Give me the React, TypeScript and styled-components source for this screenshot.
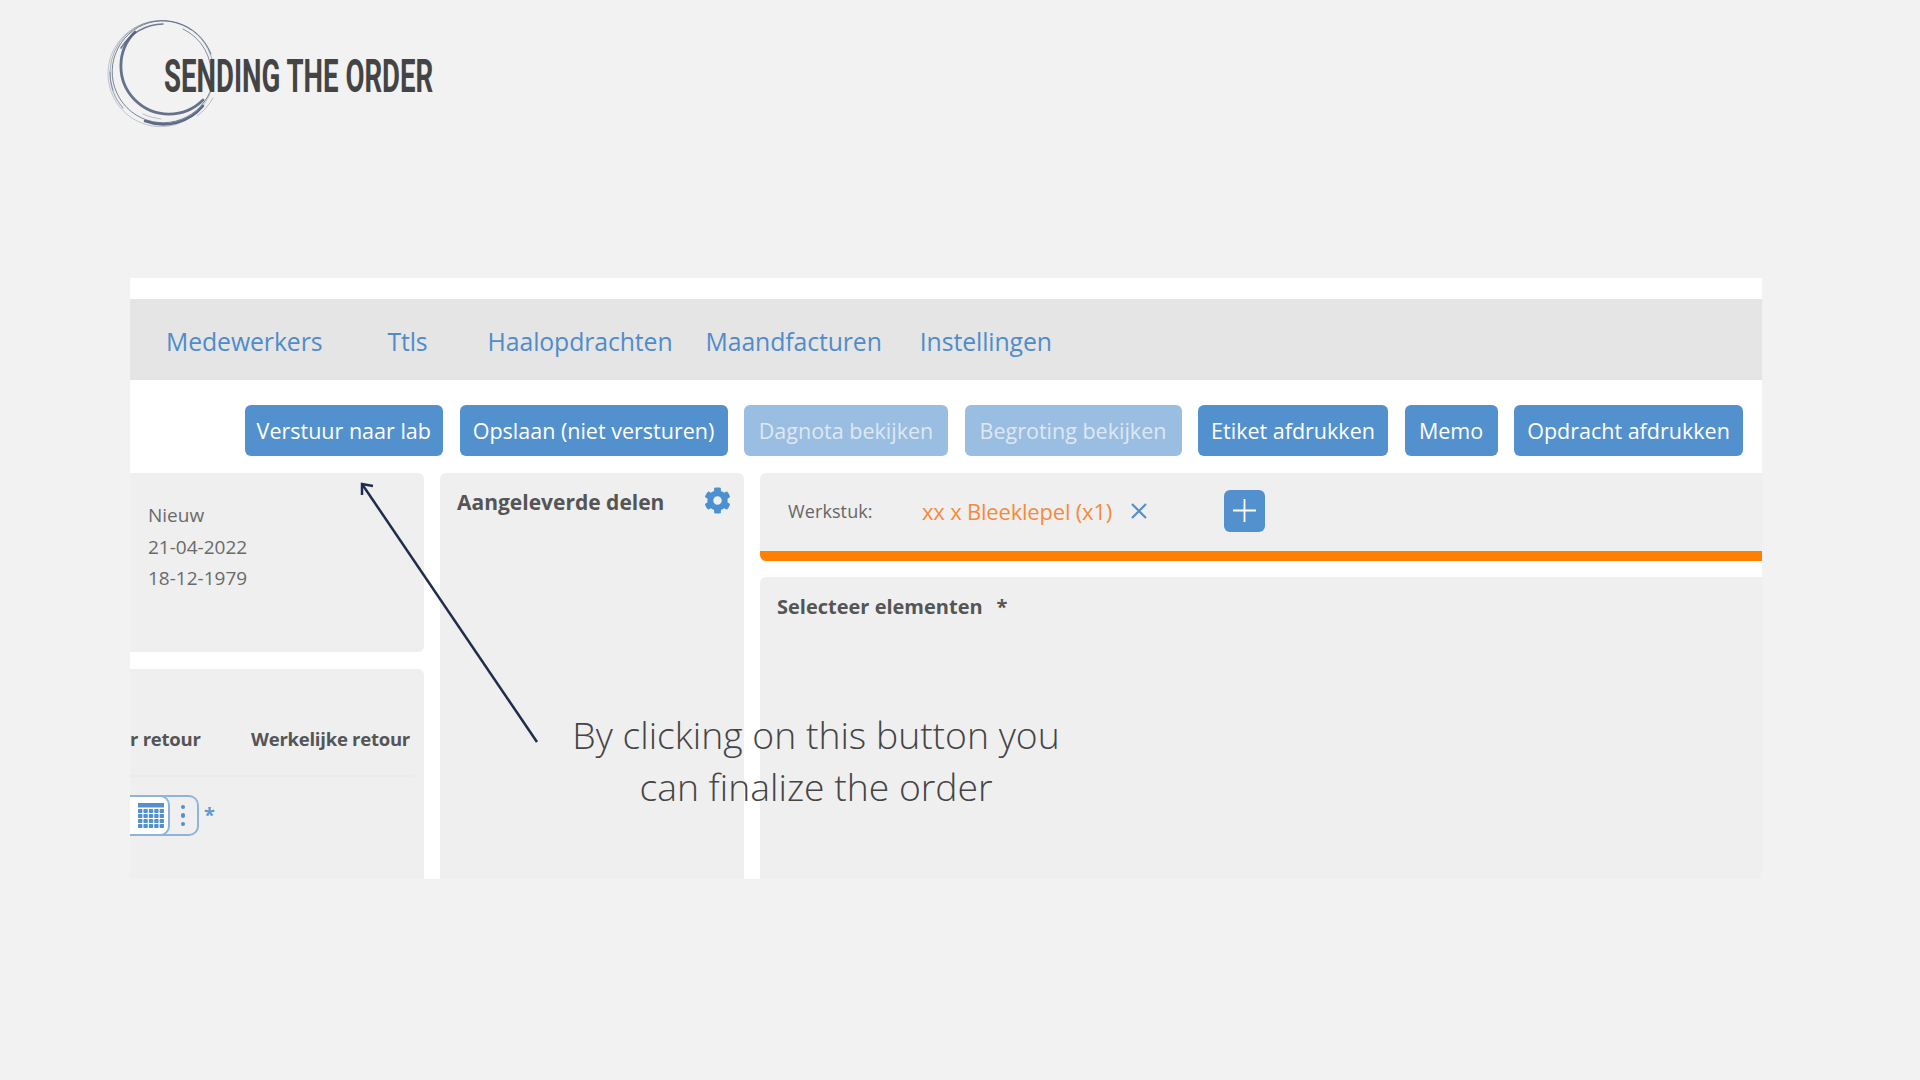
import React from "react";
import styled, { createGlobalStyle } from "styled-components";
import { FaCog } from "react-icons/fa";

const navItems = [
  { label: "Medewerkers", after: 65 },
  { label: "Ttls", after: 60 },
  { label: "Haalopdrachten", after: 33 },
  { label: "Maandfacturen", after: 38 },
  { label: "Instellingen", after: 0 },
];

const actions = [
  { label: "Verstuur naar lab", width: 198.5 },
  { label: "Opslaan (niet versturen)", width: 268 },
  { label: "Dagnota bekijken", width: 204, disabled: true },
  { label: "Begroting bekijken", width: 217, disabled: true },
  { label: "Etiket afdrukken", width: 190 },
  { label: "Memo", width: 93 },
  { label: "Opdracht afdrukken", width: 229 },
];

const App: React.FC = () => {
  return (
    <Page>
      <GlobalStyle />
      <Header>
        <LogoRing />
        <Title>SENDING THE ORDER</Title>
      </Header>
      <Frame>
        <Nav>
          {navItems.map((item) => (
            <NavLink key={item.label} $after={item.after}>{item.label}</NavLink>
          ))}
        </Nav>
        <Toolbar>
          {actions.map((action) => (
            <ActionButton key={action.label} $width={action.width} $disabled={action.disabled}>
              {action.label}
            </ActionButton>
          ))}
        </Toolbar>
        <Workspace>
          <LeftColumn>
            <StatusPanel>
              <StatusLine>Nieuw</StatusLine>
              <StatusLine>21-04-2022</StatusLine>
              <StatusLine>18-12-1979</StatusLine>
            </StatusPanel>
            <ReturnPanel>
              <ReturnHead>
                <ColumnTitle>r retour</ColumnTitle>
                <ColumnTitle>Werkelijke retour</ColumnTitle>
              </ReturnHead>
              <ReturnRow>
                <DateGroup>
                  <CalendarButton><CalendarIcon /></CalendarButton>
                  <MoreButton><MoreDot /><MoreDot /><MoreDot /></MoreButton>
                </DateGroup>
                <Required>*</Required>
              </ReturnRow>
            </ReturnPanel>
          </LeftColumn>
          <PartsPanel>
            <PartsTitle>Aangeleverde delen</PartsTitle>
            <GearIcon />
          </PartsPanel>
          <RightColumn>
            <WorkpiecePanel>
              <WorkpieceLabel>Werkstuk:</WorkpieceLabel>
              <WorkpieceName>xx x Bleeklepel (x1)</WorkpieceName>
              <CloseIcon viewBox="0 0 18 18">
                <path d="M2 2L16 16M16 2L2 16" />
              </CloseIcon>
              <AddButton>
                <svg width="25" height="25" viewBox="0 0 25 25">
                  <path d="M12.5 1V24M1 12.5H24" stroke="#fff" strokeWidth="1.8" />
                </svg>
              </AddButton>
            </WorkpiecePanel>
            <ElementsPanel>
              <ElementsTitle>Selecteer elementen<TitleStar>*</TitleStar></ElementsTitle>
            </ElementsPanel>
          </RightColumn>
        </Workspace>
        <Arrow viewBox="0 0 190 270">
          <path d="M183 264L8 6" />
          <path d="M8 17L8 6L19 8" />
        </Arrow>
        <Callout>
          By clicking on this button you
          <br />
          can finalize the order
        </Callout>
      </Frame>
    </Page>
  );
};

// brush ring, a few loose arcs round the same centre
const LogoRing: React.FC = () => (
  <RingSvg viewBox="0 0 112 112">
    <g fill="none" stroke="#4e5c7a" strokeLinecap="round">
      <path d="M84 12A53 53 0 1 0 105 70" strokeWidth="0.7" opacity="0.45" />
      <path d="M104 36A51 51 0 1 0 103 74" strokeWidth="1" opacity="0.75" />
      <path d="M106 46A52 52 0 0 0 36 6A52 52 0 0 0 6 72" strokeWidth="0.8" opacity="0.6" />
      <path d="M28 14A48 48 0 1 0 96 82" strokeWidth="2.8" opacity="0.85" />
      <path d="M56 6A50 50 0 0 0 14 30" strokeWidth="1.6" opacity="0.8" />
      <path d="M104 60A49 49 0 0 0 76 11" strokeWidth="0.8" opacity="0.85" />
      <path d="M38 103A52 52 0 0 0 96 88" strokeWidth="2.6" opacity="0.9" />
      <path d="M3 54A53 53 0 0 0 16 90" strokeWidth="1.2" opacity="0.45" />
      <path d="M36 96C42 99 48 100 54 101" strokeWidth="0.7" opacity="0.5" />
      <path d="M106 80A55 55 0 0 1 90 98" strokeWidth="0.6" opacity="0.6" />
    </g>
  </RingSvg>
);

const CalendarIcon: React.FC = () => {
  const cells = [];
  for (let row = 0; row < 4; row++) {
    for (let col = 0; col < 5; col++) {
      cells.push(<rect key={`${row}-${col}`} x={col * 5.4} y={6 + row * 5} width="4.4" height="4" rx="0.8" />);
    }
  }
  return (
    <svg width="26" height="26" viewBox="0 0 26 26" fill="#5391ce">
      <rect x="0" y="0" width="26" height="4.5" />
      {cells}
    </svg>
  );
};

const GlobalStyle = createGlobalStyle`
  html, body {
    margin: 0;
    padding: 0;
    background: #f2f2f2;
  }
`;

const Page = styled.div`
  width: 1920px;
  height: 1080px;
  overflow: hidden;
  background: #f2f2f2;
  font-family: "Open Sans", "Noto Sans", sans-serif;
`;

const Header = styled.div`
  display: flex;
  align-items: center;
  height: 112px;
  padding: 18px 0 148px 107px;
`;

const RingSvg = styled.svg`
  width: 112px;
  height: 112px;
  flex: none;
`;

const Title = styled.h1`
  margin: 3px 0 0 -55px;
  font-family: "Roboto", "Liberation Sans", sans-serif;
  font-size: 46px;
  line-height: 46px;
  font-weight: 700;
  color: #444444;
  white-space: nowrap;
  transform: scaleX(0.6);
  transform-origin: left center;
`;

const Frame = styled.div`
  position: relative;
  width: 1632px;
  height: 601px;
  margin-left: 130px;
  padding-top: 21px;
  box-sizing: border-box;
  background: #ffffff;
  overflow: hidden;
`;

const Nav = styled.nav`
  display: flex;
  align-items: center;
  height: 81px;
  padding: 3px 0 0 36px;
  box-sizing: border-box;
  background: #e5e5e5;
`;

const NavLink = styled.a<{ $after: number }>`
  margin-right: ${(p) => p.$after}px;
  font-size: 24.8px;
  letter-spacing: -0.1px;
  color: #4f8ccb;
`;

const Toolbar = styled.div`
  display: flex;
  justify-content: flex-end;
  gap: 16.5px;
  height: 93px;
  padding: 25px 19px 0 0;
  box-sizing: border-box;
`;

const ActionButton = styled.button<{ $width: number; $disabled?: boolean }>`
  width: ${(p) => p.$width}px;
  height: 51px;
  padding: 0;
  border: none;
  border-radius: 6px;
  font-family: inherit;
  font-size: 21.5px;
  white-space: nowrap;
  background: ${(p) => (p.$disabled ? "#9abde2" : "#5391ce")};
  color: ${(p) => (p.$disabled ? "#dfe8f2" : "#ffffff")};
`;

const Workspace = styled.div`
  display: flex;
  gap: 16px;
  height: 406px;
`;

const LeftColumn = styled.div`
  display: flex;
  flex-direction: column;
  gap: 17px;
  width: 294px;
  flex: none;
`;

const StatusPanel = styled.div`
  height: 179px;
  padding: 27px 0 0 18px;
  box-sizing: border-box;
  background: #efefef;
  border-radius: 0 6px 6px 0;
`;

const StatusLine = styled.div`
  font-size: 19px;
  line-height: 31.5px;
  color: #6a6a6a;
`;

const ReturnPanel = styled.div`
  flex: 1;
  background: #efefef;
  border-radius: 0 6px 0 0;
`;

const ReturnHead = styled.div`
  display: flex;
  justify-content: space-between;
  height: 108px;
  margin-right: 9px;
  padding: 55px 5px 0 0;
  box-sizing: border-box;
  border-bottom: 2px solid #ebebeb;
`;

const ColumnTitle = styled.div`
  font-size: 18.5px;
  line-height: 30px;
  font-weight: 700;
  letter-spacing: -0.25px;
  color: #555555;
`;

const ReturnRow = styled.div`
  display: flex;
  align-items: flex-start;
  padding-top: 18px;
`;

const DateGroup = styled.div`
  display: flex;
  width: 69px;
  height: 41px;
`;

const CalendarButton = styled.div`
  display: flex;
  align-items: center;
  justify-content: center;
  position: relative;
  z-index: 1;
  width: 40px;
  box-sizing: border-box;
  padding-left: 4px;
  background: #ffffff;
  border: 2px solid #8fb4dc;
  border-left: none;
  border-radius: 0 10px 10px 0;
`;

const MoreButton = styled.div`
  display: flex;
  flex-direction: column;
  align-items: center;
  justify-content: center;
  gap: 4px;
  flex: 1;
  margin-left: -10px;
  padding-left: 9px;
  border: 2px solid #8fb4dc;
  border-left: none;
  border-radius: 0 10px 10px 0;
`;

const MoreDot = styled.span`
  width: 4.5px;
  height: 4.5px;
  border-radius: 50%;
  background: #5391ce;
`;

const Required = styled.span`
  margin: 6px 0 0 5px;
  font-size: 20px;
  font-weight: 700;
  color: #5f98d2;
`;

const PartsPanel = styled.div`
  display: flex;
  justify-content: space-between;
  width: 304px;
  flex: none;
  padding: 14px 13px 0 17px;
  box-sizing: border-box;
  background: #efefef;
  border-radius: 6px 6px 0 0;
`;

const PartsTitle = styled.div`
  font-size: 21px;
  line-height: 30px;
  font-weight: 700;
  color: #555555;
`;

const GearIcon = styled(FaCog)`
  width: 27px;
  height: 27px;
  color: #4b90d1;
`;

const RightColumn = styled.div`
  display: flex;
  flex-direction: column;
  flex: 1;
  gap: 16px;
`;

const WorkpiecePanel = styled.div`
  display: flex;
  align-items: center;
  height: 88px;
  padding: 0 0 3px 28px;
  box-sizing: border-box;
  background: #efefef;
  border-bottom: 10px solid #ff7f00;
  border-radius: 6px 0 0 6px;
`;

const WorkpieceLabel = styled.span`
  width: 134px;
  margin-top: 1px;
  font-size: 18px;
  letter-spacing: 0.1px;
  color: #666666;
`;

const WorkpieceName = styled.span`
  margin-top: 1px;
  font-size: 22px;
  letter-spacing: -0.2px;
  color: #f58a3c;
`;

const CloseIcon = styled.svg`
  width: 18px;
  height: 18px;
  margin-left: 18px;
  fill: none;
  stroke: #5391ce;
  stroke-width: 2.2;
`;

const AddButton = styled.div`
  display: flex;
  align-items: center;
  justify-content: center;
  width: 41px;
  height: 42px;
  margin-left: 76px;
  background: #5391ce;
  border-radius: 6px;
`;

const ElementsPanel = styled.div`
  flex: 1;
  padding: 15px 0 0 17px;
  background: #efefef;
  border-radius: 6px 0 0 0;
`;

const ElementsTitle = styled.div`
  font-size: 20px;
  line-height: 30px;
  font-weight: 700;
  color: #555555;
`;

const TitleStar = styled.span`
  margin-left: 14px;
`;

const Arrow = styled.svg`
  position: absolute;
  left: 224px;
  top: 200px;
  width: 190px;
  height: 270px;
  fill: none;
  stroke: #1f2d4d;
  stroke-width: 2.5;
`;

const Callout = styled.div`
  position: absolute;
  left: 386px;
  top: 431px;
  width: 600px;
  font-size: 37.3px;
  line-height: 52px;
  font-weight: 300;
  text-align: center;
  color: #444444;
`;

export default App;
